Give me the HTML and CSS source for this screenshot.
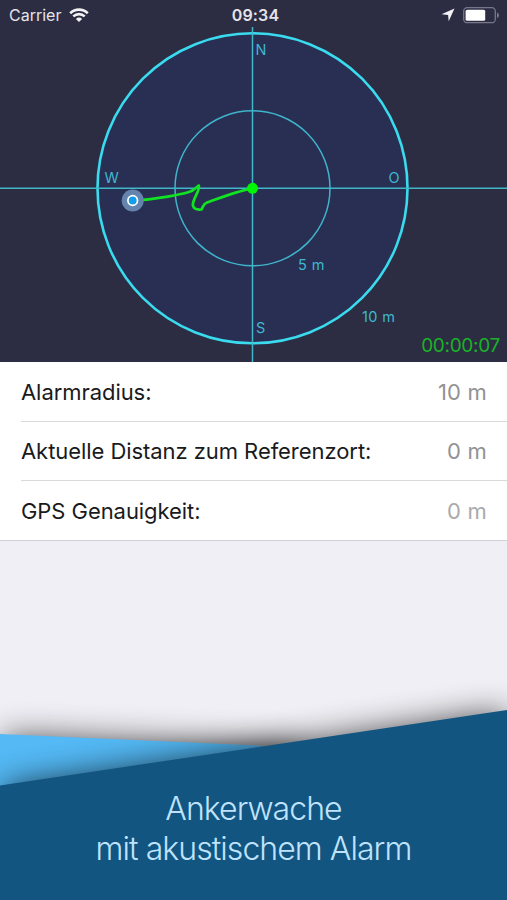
FILE: index.html
```
<!DOCTYPE html>
<html lang="de">
<head>
  <meta charset="UTF-8" />
  <meta name="viewport" content="width=device-width, initial-scale=1.0"/>
  <title>Ankerwache</title>
  <link rel="stylesheet" href="styles.css">
</head>
<body>
  <div class="screen">
    <section class="radar">
      <svg class="radar-chart" viewBox="0 0 507 362">
        <circle class="ring-outer" cx="252.5" cy="188.3" r="155"/>
        <circle class="ring-inner" cx="252.5" cy="188.3" r="77.5"/>
        <path class="axis" d="M0 188.3H507M252.5 27V362"/>
        <g class="compass">
          <text x="255.5" y="54.5">N</text>
          <text x="104.5" y="182.5">W</text>
          <text x="388.5" y="182.5">O</text>
          <text x="256" y="332.5">S</text>
          <text x="298" y="269.5" textLength="26.5">5 m</text>
          <text x="362" y="321.5" textLength="33">10 m</text>
        </g>
        <path class="track" d="M133 200.5C158 199.5 182 194 189 192C194 190.5 196 187.5 198.8 185.5C200.5 190 193 198 192.8 205C193.5 208.5 197 210 201.5 209.5C203.5 206 203 204 207 202.5C218 198.5 236 191.5 252.5 188.3"/>
        <circle class="anchor" cx="252.5" cy="188.3" r="5.5"/>
        <circle class="boat-halo" cx="132.7" cy="200.5" r="11"/>
        <circle class="boat" cx="132.7" cy="200.5" r="4.8"/>
      </svg>
      <header class="status-bar">
        <div class="status-left">
          <span class="carrier">Carrier</span>
          <svg class="wifi" width="20" height="15" viewBox="0 0 20 15">
            <path d="M1.2 5.2C6.2 .4 13.8 .4 18.8 5.2"/>
            <path d="M4.3 8.4C7.6 5.3 12.4 5.3 15.7 8.4"/>
            <path class="wifi-dot" d="M6.9 10.9Q10 8.2 13.1 10.9L10 14Z"/>
          </svg>
        </div>
        <span class="time">09:34</span>
        <div class="status-right">
          <svg width="14" height="14" viewBox="0 0 14 14"><path fill="#f2f2f5" d="M13.5 .5L7.7 13.3L7.1 6.9L.5 6.3Z"/></svg>
          <svg width="36" height="17" viewBox="0 0 36 17">
            <rect class="battery-case" x=".7" y=".7" width="31.6" height="15" rx="3.5"/>
            <rect x="2.6" y="2.7" width="19.6" height="11" rx="1.5" fill="#fff"/>
            <path d="M34 5.5Q36 6 36 8.2T34 11Z" fill="#77778a"/>
          </svg>
        </div>
      </header>
      <span class="timer">00:00:07</span>
    </section>

    <ul class="values">
      <li><span class="label">Alarmradius:</span><span class="value">10 m</span></li>
      <li><span class="label">Aktuelle Distanz zum Referenzort:</span><span class="value">0 m</span></li>
      <li><span class="label">GPS Genauigkeit:</span><span class="value value-dim">0 m</span></li>
    </ul>

    <footer class="banner">
      <svg class="banner-shape" viewBox="0 0 507 260">
        <defs>
          <filter id="blur" filterUnits="userSpaceOnUse" x="-80" y="-40" width="680" height="440">
            <feGaussianBlur stdDeviation="17"/>
          </filter>
          <clipPath id="light"><path d="M0 94L300 107.5V160H0Z"/></clipPath>
        </defs>
        <path class="shadow shadow-light" d="M4 98L300 110V220H4Z"/>
        <path class="shadow shadow-dark" d="M4 149L507 74V330H4Z"/>
        <path fill="#54b9f5" d="M0 94L300 107.5V160H0Z"/>
        <g clip-path="url(#light)"><path class="shadow shadow-dark" d="M4 149L507 74V330H4Z"/></g>
        <path fill="#125581" d="M0 145.5L507 70V260H0Z"/>
      </svg>
      <p class="banner-text">Ankerwache<br>mit akustischem Alarm</p>
    </footer>
  </div>
</body>
</html>
```

FILE: styles.css
```
* {
  margin: 0;
  padding: 0;
  box-sizing: border-box;
}

body {
  font-family: Inter, "Liberation Sans", sans-serif;
  background: #f0eff5;
}

.screen {
  width: 507px;
  height: 900px;
  display: flex;
  flex-direction: column;
  overflow: hidden;
}

.radar {
  position: relative;
  height: 362px;
  background: #2c2d43;
}

.radar-chart {
  display: block;
  width: 507px;
  height: 362px;
}

.ring-outer {
  fill: #282f53;
  stroke: #3adbee;
  stroke-width: 2.6;
}

.ring-inner {
  fill: none;
  stroke: #3fb4cb;
  stroke-width: 1.5;
}

.axis {
  stroke: #40b6c9;
  stroke-width: 1.5;
}

.compass {
  fill: #3fb8d0;
  font-size: 14.5px;
}

.track {
  fill: none;
  stroke: #10e321;
  stroke-width: 2.7;
  stroke-linejoin: round;
}

.anchor {
  fill: #00f500;
}

.boat-halo {
  fill: #6484ad;
}

.boat {
  fill: #129ee8;
  stroke: #fff;
  stroke-width: 1.7;
}

.status-bar {
  position: absolute;
  top: 0;
  left: 0;
  width: 100%;
  height: 30px;
  padding: 0 8px 0 9px;
  display: grid;
  grid-template-columns: 1fr auto 1fr;
  align-items: center;
  color: #e4e4ea;
}

.status-left,
.status-right {
  display: flex;
  align-items: center;
  gap: 8px;
}

.status-right {
  justify-content: flex-end;
}

.carrier {
  font-size: 16px;
}

.wifi {
  fill: none;
  stroke: #f2f2f5;
  stroke-width: 2.6;
}

.wifi-dot {
  fill: #f2f2f5;
  stroke: none;
}

.time {
  padding-left: 3px;
  font-size: 16px;
  font-weight: 600;
  letter-spacing: 0.2px;
}

.battery-case {
  fill: none;
  stroke: #77778a;
  stroke-width: 1.3;
}

.timer {
  position: absolute;
  right: 7px;
  bottom: 4px;
  font-size: 19px;
  line-height: 24px;
  letter-spacing: -0.3px;
  color: #18b326;
}

.values {
  list-style: none;
  background: #fff;
  border-bottom: 1px solid #d2d2d5;
}

.values li {
  display: flex;
  justify-content: space-between;
  align-items: center;
  height: 59.3px;
  margin-left: 21px;
  padding-right: 20px;
  font-size: 22px;
  border-bottom: 1px solid #d9d9dc;
}

.values li:first-child {
  height: 60px;
}

.values li:last-child {
  height: 58.7px;
  border-bottom: none;
}

.label {
  color: #1a1a1c;
  letter-spacing: -0.06px;
}

.value {
  color: #929294;
  letter-spacing: 0.2px;
}

.value-dim {
  color: #aaaaac;
}

.banner {
  position: relative;
  height: 260px;
  margin-top: auto;
}

.banner-shape {
  display: block;
  width: 507px;
  height: 260px;
}

.shadow {
  fill: #000;
  filter: url(#blur);
}

.shadow-light {
  opacity: 0.75;
}

.shadow-dark {
  opacity: 0.8;
}

.banner-text {
  position: absolute;
  top: 149px;
  left: 0;
  width: 100%;
  text-align: center;
  font-size: 32px;
  font-weight: 350;
  line-height: 40px;
  letter-spacing: -0.95px;
  color: #bfe3fc;
}
```
